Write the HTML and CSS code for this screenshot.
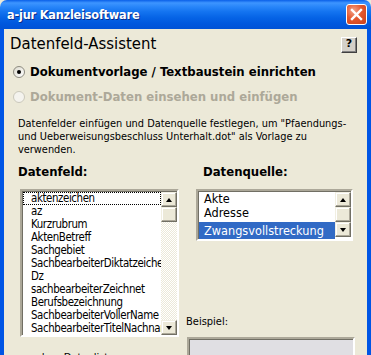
FILE: index.html
```html
<!DOCTYPE html>
<html>
<head>
<meta charset="utf-8">
<link rel="stylesheet" href="styles.css">
</head>
<body>
<div class="window">
  <div class="titlebar">
    <span class="title">a-jur Kanzleisoftware</span>
    <span class="close"><svg width="13" height="13" viewBox="0 0 13 13"><path d="M2 2 L11 11 M11 2 L2 11" stroke="#fff" stroke-width="2.4" stroke-linecap="square"/></svg></span>
  </div>
  <div class="client">
    <div class="header">
      <h1 class="heading">Datenfeld-Assistent</h1>
      <span class="help">?</span>
    </div>
    <div class="radio"><span class="circle checked"></span><span>Dokumentvorlage / Textbaustein einrichten</span></div>
    <div class="radio disabled"><span class="circle"></span><span>Dokument-Daten einsehen und einfügen</span></div>
    <p class="desc">Datenfelder einfügen und Datenquelle festlegen, um "Pfaendungs-<br>und Ueberweisungsbeschluss Unterhalt.dot" als Vorlage zu<br>verwenden.</p>
    <div class="cols">
      <div class="col-left">
        <div class="label">Datenfeld:</div>
        <div class="listbox big">
          <div class="items">
            <div class="item focus">aktenzeichen</div>
            <div class="item">az</div>
            <div class="item">Kurzrubrum</div>
            <div class="item">AktenBetreff</div>
            <div class="item">Sachgebiet</div>
            <div class="item">SachbearbeiterDiktatzeichen</div>
            <div class="item">Dz</div>
            <div class="item">sachbearbeiterZeichnet</div>
            <div class="item">Berufsbezeichnung</div>
            <div class="item">SachbearbeiterVollerName</div>
            <div class="item">SachbearbeiterTitelNachname</div>
          </div>
          <div class="scrollbar">
            <div class="sbtn"><span class="tri up"></span></div>
            <div class="thumb"></div>
            <div class="track"></div>
            <div class="sbtn"><span class="tri down"></span></div>
          </div>
        </div>
        <div class="label2">andere Datenliste:</div>
      </div>
      <div class="col-right">
        <div class="label">Datenquelle:</div>
        <div class="listbox small">
          <div class="items">
            <div class="item">Akte</div>
            <div class="item">Adresse</div>
            <div class="item selected">Zwangsvollstreckung</div>
          </div>
          <div class="scrollbar">
            <div class="sbtn"><span class="tri up"></span></div>
            <div class="thumb"></div>
            <div class="sbtn"><span class="tri down"></span></div>
          </div>
        </div>
        <div class="beispiel">Beispiel:</div>
        <div class="example"></div>
      </div>
    </div>
  </div>
</div>
</body>
</html>
```
FILE: styles.css
```css
* { box-sizing: border-box; }
html, body { margin: 0; padding: 0; background: #ECE9D8; }
body { width: 371px; height: 355px; overflow: hidden; }
.window {
  width: 371px; height: 355px; overflow: hidden;
  display: flex; flex-direction: column;
  font-family: "DejaVu Sans Condensed", "DejaVu Sans", sans-serif;
  color: #000;
}
.titlebar {
  height: 29px; flex: none;
  display: flex; align-items: center; justify-content: space-between;
  padding: 0 4px 0 7px;
  background: linear-gradient(#0A5FE8 0%, #3D95FF 10%, #2A87FA 22%, #1474F0 40%, #0664E6 60%, #0058DE 80%, #0052D6 100%);
  border-radius: 7px 7px 0 0;
}
.title {
  color: #fff; font-family: "DejaVu Sans Condensed", "DejaVu Sans", sans-serif; font-weight: bold; font-size: 12.6px;
  letter-spacing: -0.2px;
  text-shadow: 1px 1px 0 #0A2E8C;
}
.close {
  width: 21px; height: 21px; border: 1px solid #fff; border-radius: 3px;
  background: radial-gradient(circle at 35% 30%, #F3A38A 0%, #E4582E 45%, #C8401C 100%);
  display: flex; align-items: center; justify-content: center;
}
.close svg { display: block; }
.client {
  flex: 1; min-height: 0;
  border-left: 4px solid #0055E5; border-right: 4px solid #0055E5;
  background: #ECE9D8;
}
.header { display: flex; align-items: flex-start; justify-content: space-between; padding: 5px 10px 0 6px; }
.heading { margin: 0; font-family: "DejaVu Sans Condensed", "DejaVu Sans", sans-serif; font-weight: normal; font-size: 16.6px; line-height: 19px; }
.help {
  margin-top: 3px; width: 16px; height: 16px;
  font-weight: bold; font-size: 11px; line-height: 12px; text-align: center;
  background: #D4D0C8;
  border: 1px solid; border-color: #fff #404040 #404040 #fff;
  box-shadow: inset -1px -1px 0 #808080;
  font-family: "DejaVu Sans", sans-serif;
}
.radio {
  display: flex; align-items: center; gap: 5px;
  margin-left: 9px; height: 16px;
  font-weight: bold; font-size: 13px; line-height: 16px;
}
.header + .radio { margin-top: 11px; }
.radio + .radio { margin-top: 9px; }
.circle {
  width: 12px; height: 12px; border-radius: 50%;
  border: 1px solid #8D8B80; background: linear-gradient(135deg, #DCDACE, #fff);
  display: flex; align-items: center; justify-content: center; flex: none;
}
.circle.checked::after { content: ""; width: 4px; height: 4px; border-radius: 50%; background: #000; }
.radio.disabled { color: #ACA899; }
.radio.disabled .circle { border-color: #CAC8BB; background: #F4F3EE; }
.desc {
  margin: 12px 0 0 14px; font-size: 10.9px; line-height: 13px;
}
.cols { display: flex; margin-top: 8px; padding-left: 14px; }
.col-left { width: 165px; flex: none; }
.col-right { flex: 1; padding-left: 20px; }
.label { font-weight: bold; font-size: 13px; line-height: 16px; height: 16px; }
.listbox {
  margin-top: 9px; display: flex;
  border: 2px solid; border-color: #ACA899 #fff #fff #ACA899;
  box-shadow: inset 1px 1px 0 #716F64;
  background: #fff;
}
.col-left .listbox { margin-left: 2px; width: 159px; height: 148px; }
.col-right .listbox { margin-left: -7px; width: 157px; height: 52px; }
.items { flex: 1; min-width: 0; overflow: hidden; padding-top: 1px; padding-left: 1px; }
.item { height: 13px; line-height: 13px; white-space: nowrap; overflow: hidden; padding-left: 8px; font-size: 11.4px; letter-spacing: -0.4px; }
.col-right .item { padding-left: 5px; letter-spacing: 0; font-size: 12.6px; height: 14px; line-height: 14px; }
.item.focus { outline: 1px dotted #000; outline-offset: -1px; }
.col-right .item.selected { background: #316AC5; color: #fff; height: 17px; line-height: 17px; margin-top: 2px; }
.scrollbar { width: 16px; flex: none; display: flex; flex-direction: column; padding-top: 1px; }
.sbtn, .thumb {
  width: 16px; height: 15px; flex: none;
  background: #ECE9D8;
  border: 1px solid; border-color: #F1EFE2 #716F64 #716F64 #F1EFE2;
  box-shadow: inset -1px -1px 0 #ACA899, inset 1px 1px 0 #fff;
  display: flex; align-items: center; justify-content: center;
}
.track { flex: 1; background: repeating-conic-gradient(#fff 0 25%, #ECE9D8 0 50%) 0 0 / 2px 2px; }
.tri { width: 0; height: 0; border-left: 3.5px solid transparent; border-right: 3.5px solid transparent; }
.tri.up { border-bottom: 4px solid #000; }
.tri.down { border-top: 4px solid #000; }
.label2 { margin-top: 14px; font-size: 11px; line-height: 13px; margin-left: 8px; }
.beispiel { margin-top: 74px; margin-left: -17px; font-size: 11px; line-height: 13px; }
.example {
  margin-top: 9px; margin-left: -16px; width: 168px; height: 40px;
  background: #E0DFE3;
  border: 2px solid; border-color: #ACA899 #fff #fff #ACA899;
  box-shadow: inset 1px 1px 0 #716F64;
}
```
